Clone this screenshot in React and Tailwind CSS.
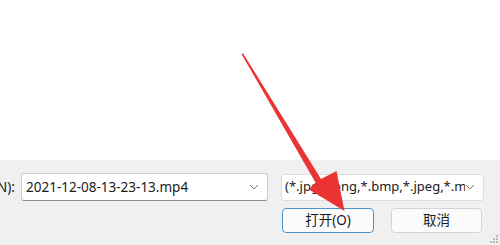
import React from "react";

function Chevron() {
  return (
    <svg width="10" height="6" viewBox="0 0 10 6" className="shrink-0">
      <path d="M1 1l4 4 4-4" fill="none" stroke="#7a7a7a" strokeWidth="1" />
    </svg>
  );
}

function Arrow() {
  // tapered red arrow drawn over the dialog
  return (
    <svg
      className="pointer-events-none absolute left-0 top-0"
      width="500"
      height="245"
      viewBox="0 0 500 245"
    >
      <polygon
        points="241.5,54 243,53.2 321,179 336.5,171 344.5,211 309,189.5 315.5,182.5"
        fill="#ea3434"
      />
    </svg>
  );
}

export default function App() {
  return (
    <div
      className="relative flex h-[245px] w-[500px] flex-col overflow-hidden bg-[#f0f0f0] text-[13.5px] text-[#1b1b1b]"
      style={{ fontFamily: '"Noto Sans", "Noto Sans CJK SC", sans-serif' }}
    >
      <div className="h-[160px] bg-white" />
      <div className="flex flex-col gap-[7px] pt-[13px]">
        <div className="flex items-center">
          <span className="-ml-[3px] w-[21px] text-[#1b1b1b]">N):</span>
          <div className="ml-[3px] flex h-[28px] w-[247px] items-center rounded-[3px] border border-[#cfcfcf] border-b-[#8a8a8a] bg-white pl-[4px] pr-[8px]">
            <span className="flex-1 whitespace-nowrap">2021-12-08-13-23-13.mp4</span>
            <Chevron />
          </div>
          <div className="ml-[13px] flex h-[27px] w-[203px] items-center rounded-[3px] border border-[#dcdcdc] bg-white pl-[3px] pr-[8px]">
            <span className="flex-1 overflow-hidden whitespace-nowrap text-[13px]">
              (*.jpg,*.png,*.bmp,*.jpeg,*.mp4)
            </span>
            <Chevron />
          </div>
        </div>
        <div className="flex gap-[17px] pl-[282px]">
          <button className="h-[25px] w-[92px] rounded-[4px] border border-[#4f92c9] bg-[#fbfbfb] text-[13.5px]">
            打开(O)
          </button>
          <button className="h-[25px] w-[91px] rounded-[4px] border border-[#d5d5d5] bg-[#fbfbfb] text-[13.5px]">
            取消
          </button>
        </div>
      </div>
      <div className="absolute bottom-[2px] right-[2px] grid grid-cols-3 gap-[1px]">
        <span />
        <span />
        <span className="h-[2px] w-[2px] bg-[#b8b8b8]" />
        <span />
        <span className="h-[2px] w-[2px] bg-[#b8b8b8]" />
        <span className="h-[2px] w-[2px] bg-[#b8b8b8]" />
        <span className="h-[2px] w-[2px] bg-[#b8b8b8]" />
        <span className="h-[2px] w-[2px] bg-[#b8b8b8]" />
        <span className="h-[2px] w-[2px] bg-[#b8b8b8]" />
      </div>
      <Arrow />
    </div>
  );
}
